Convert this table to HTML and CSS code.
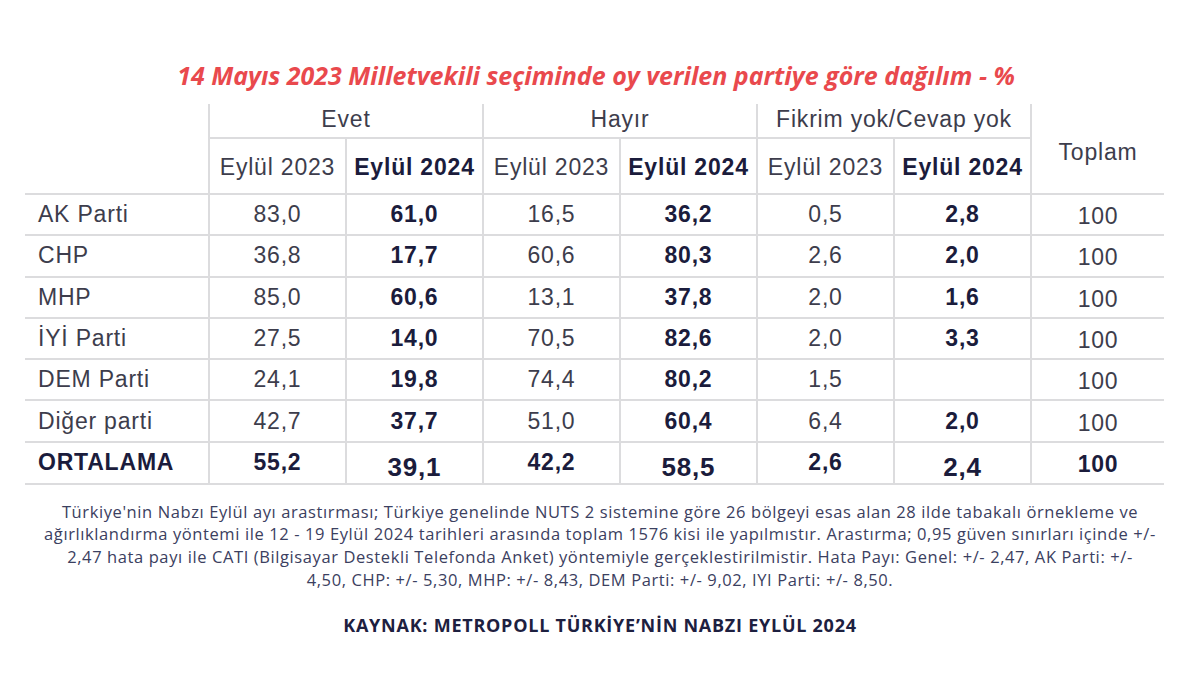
FILE: index.html
```html
<!DOCTYPE html>
<html lang="tr">
<head>
<meta charset="utf-8">
<title>Metropoll</title>
<link rel="stylesheet" href="styles.css">
</head>
<body>
<div class="page">
  <h1 class="title">14 Mayıs 2023 Milletvekili seçiminde oy verilen partiye göre dağılım - %</h1>
  <table class="grid">
    <colgroup>
      <col class="c-name">
      <col class="c-val"><col class="c-val"><col class="c-val"><col class="c-val"><col class="c-val"><col class="c-val">
      <col class="c-tot">
    </colgroup>
    <thead>
      <tr class="h1">
        <th class="blank" rowspan="2"></th>
        <th colspan="2">Evet</th>
        <th colspan="2">Hayır</th>
        <th colspan="2">Fikrim yok/Cevap yok</th>
        <th class="tot" rowspan="2">Toplam</th>
      </tr>
      <tr class="h2">
        <th>Eylül 2023</th><th class="b">Eylül 2024</th>
        <th>Eylül 2023</th><th class="b">Eylül 2024</th>
        <th>Eylül 2023</th><th class="b">Eylül 2024</th>
      </tr>
    </thead>
    <tbody>
      <tr><td class="name">AK Parti</td><td>83,0</td><td class="b">61,0</td><td>16,5</td><td class="b">36,2</td><td>0,5</td><td class="b">2,8</td><td class="tot">100</td></tr>
      <tr><td class="name">CHP</td><td>36,8</td><td class="b">17,7</td><td>60,6</td><td class="b">80,3</td><td>2,6</td><td class="b">2,0</td><td class="tot">100</td></tr>
      <tr><td class="name">MHP</td><td>85,0</td><td class="b">60,6</td><td>13,1</td><td class="b">37,8</td><td>2,0</td><td class="b">1,6</td><td class="tot">100</td></tr>
      <tr><td class="name">İYİ Parti</td><td>27,5</td><td class="b">14,0</td><td>70,5</td><td class="b">82,6</td><td>2,0</td><td class="b">3,3</td><td class="tot">100</td></tr>
      <tr><td class="name">DEM Parti</td><td>24,1</td><td class="b">19,8</td><td>74,4</td><td class="b">80,2</td><td>1,5</td><td class="b"></td><td class="tot">100</td></tr>
      <tr><td class="name">Diğer parti</td><td>42,7</td><td class="b">37,7</td><td>51,0</td><td class="b">60,4</td><td>6,4</td><td class="b">2,0</td><td class="tot">100</td></tr>
      <tr class="avg"><td class="name">ORTALAMA</td><td class="up">55,2</td><td class="big">39,1</td><td class="up">42,2</td><td class="big">58,5</td><td class="up">2,6</td><td class="big">2,4</td><td class="tot">100</td></tr>
    </tbody>
  </table>
  <p class="note">Türkiye'nin Nabzı Eylül ayı arastırması; Türkiye genelinde NUTS 2 sistemine göre 26 bölgeyi esas alan 28 ilde tabakalı örnekleme ve<br>ağırlıklandırma yöntemi ile 12 - 19 Eylül 2024 tarihleri arasında toplam 1576 kisi ile yapılmıstır. Arastırma; 0,95 güven sınırları içinde +/-<br>2,47 hata payı ile CATI (Bilgisayar Destekli Telefonda Anket) yöntemiyle gerçeklestirilmistir. Hata Payı: Genel: +/- 2,47, AK Parti: +/-<br>4,50, CHP: +/- 5,30, MHP: +/- 8,43, DEM Parti: +/- 9,02, IYI Parti: +/- 8,50.</p>
  <p class="source">KAYNAK: METROPOLL TÜRKİYE’NİN NABZI EYLÜL 2024</p>
</div>
</body>
</html>
```

FILE: styles.css
```css
* { box-sizing: border-box; }
html, body { margin: 0; padding: 0; background: #ffffff; }
body { width: 1200px; height: 675px; overflow: hidden; }

.page {
  padding-top: 59px;
  display: flex;
  flex-direction: column;
  align-items: center;
}

.title {
  margin: 0;
  font-family: "Open Sans", "Liberation Sans", sans-serif;
  font-style: italic;
  font-weight: 700;
  font-size: 25px;
  line-height: 32px;
  color: #e9494d;
  text-align: center;
  margin-left: -8px;
  white-space: nowrap;
}

.grid {
  margin-top: 13px;
  margin-left: -11px;
  width: 1139px;
  border-collapse: collapse;
  table-layout: fixed;
  font-family: "Liberation Sans", Arial, sans-serif;
  font-size: 23px;
  letter-spacing: 0.8px;
  color: #3d3d4c;
}
.c-name { width: 184px; }
.c-val { width: 137px; }
.c-tot { width: 133px; }

.grid th, .grid td {
  border: 2px solid #dcdcde;
  padding: 0;
  text-align: center;
  font-weight: 400;
  white-space: nowrap;
}
.grid thead tr.h1 th { border-top: none; height: 34px; padding-bottom: 2px; }
.grid thead tr.h2 th { height: 56px; padding-top: 2px; }
.grid th.blank { border-left: none; border-top: none; }
.grid th.tot { border-right: none; border-top: none; padding-top: 9px; }
.grid td.name { border-left: none; text-align: left; padding-left: 13px; }
.grid td.tot { border-right: none; padding-top: 4px; }
.grid tbody tr { height: 41.3px; }

.grid .b { font-weight: 700; color: #1b1c3c; }
.grid tr.avg td { font-weight: 700; color: #1b1c3c; }
.grid tr.avg td.name { padding-top: 0; padding-bottom: 0; }
.grid tr.avg td.up { padding-bottom: 1px; }
.grid tr.avg td.big { font-size: 26px; padding-top: 9px; }
.grid tr.avg td.tot { padding-top: 4px; }

.note {
  margin: 16px 0 0;
  font-family: "Open Sans", "Liberation Sans", sans-serif;
  font-size: 16.5px;
  letter-spacing: 0.6px;
  line-height: 22.6px;
  color: #3b4060;
  text-align: center;
  white-space: nowrap;
}

.source {
  margin: 22px 0 0;
  font-family: "Open Sans", "Liberation Sans", sans-serif;
  font-weight: 700;
  font-size: 18px;
  line-height: 24px;
  letter-spacing: 0.75px;
  color: #1d2040;
  text-align: center;
}
```
